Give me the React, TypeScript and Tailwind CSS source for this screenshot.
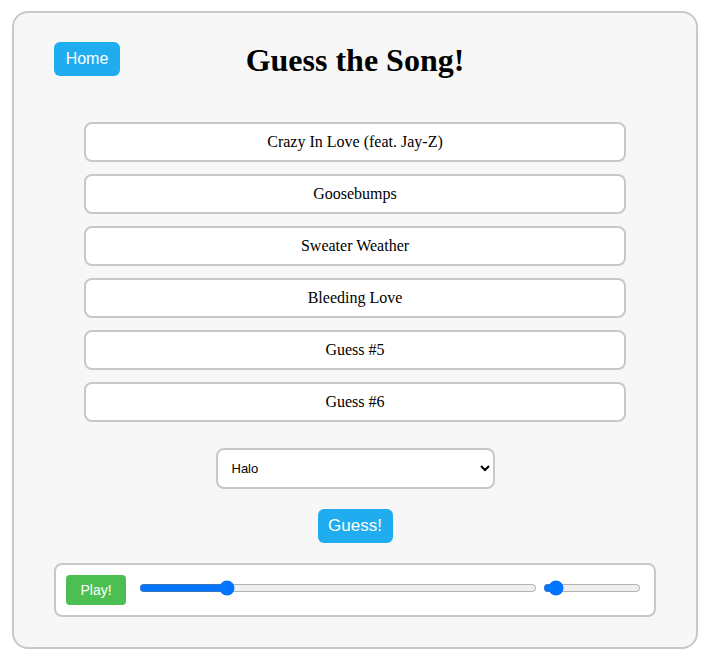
import React from 'react';

export default function App() {
  const guesses = [
    'Crazy In Love (feat. Jay-Z)',
    'Goosebumps',
    'Sweater Weather',
    'Bleeding Love',
    'Guess #5',
    'Guess #6',
  ];

  return (
    <div className="min-h-screen bg-white pt-[11px] pl-[12px]">
      {/* Game card */}
      <div className="w-[686px] h-[638px] rounded-[16px] border-2 border-[#c8c8c8] bg-[#f7f7f7] px-[40px] pt-[29px]">
        {/* Header */}
        <div className="grid grid-cols-[1fr_auto_1fr] items-center h-[34px]">
          <div>
            <button className="h-[34px] w-[66px] rounded-[6px] bg-[#1fadef] text-white text-[16px] font-['Liberation_Sans',Arial,sans-serif]">
              Home
            </button>
          </div>
          <h1 className="text-[32px] font-bold text-black font-['Liberation_Serif','Times_New_Roman',serif] leading-none mt-[2px]">
            Guess the Song!
          </h1>
          <div />
        </div>

        {/* Guesses */}
        <div className="mt-[46px] flex flex-col gap-[12px] px-[30px]">
          {guesses.map((g) => (
            <div
              key={g}
              className="h-[40px] rounded-[8px] border-2 border-[#c8c8c8] bg-white flex items-center justify-center text-[16px] text-black font-['Liberation_Serif','Times_New_Roman',serif]"
            >
              {g}
            </div>
          ))}
        </div>

        {/* Song picker */}
        <div className="mt-[26px] flex justify-center">
          <select
            defaultValue="Halo"
            className="w-[279px] h-[41px] rounded-[8px] border-2 border-[#c8c8c8] bg-white pl-[10px] pr-[6px] text-[13px] text-black font-['Liberation_Sans',Arial,sans-serif]"
          >
            <option>Halo</option>
            <option>Crazy In Love (feat. Jay-Z)</option>
            <option>Goosebumps</option>
            <option>Sweater Weather</option>
            <option>Bleeding Love</option>
          </select>
        </div>

        <div className="mt-[20px] flex justify-center">
          <button className="h-[34px] w-[75px] rounded-[6px] bg-[#1fadef] text-white text-[17px] font-['Liberation_Sans',Arial,sans-serif]">
            Guess!
          </button>
        </div>

        {/* Player */}
        <div className="mt-[20px] h-[54px] rounded-[8px] border-2 border-[#c8c8c8] bg-white flex items-center pl-[10px]">
          <button className="h-[30px] w-[60px] rounded-[4px] bg-[#4cbf52] text-white text-[14px] font-['Liberation_Sans',Arial,sans-serif]">
            Play!
          </button>
          <input
            type="range"
            min={0}
            max={100}
            defaultValue={21}
            className="ml-[13px] w-[398px] m-0 -mt-[4px]"
          />
          <input
            type="range"
            min={0}
            max={100}
            defaultValue={6}
            className="ml-[6px] w-[98px] m-0 -mt-[4px]"
          />
        </div>
      </div>
    </div>
  );
}
